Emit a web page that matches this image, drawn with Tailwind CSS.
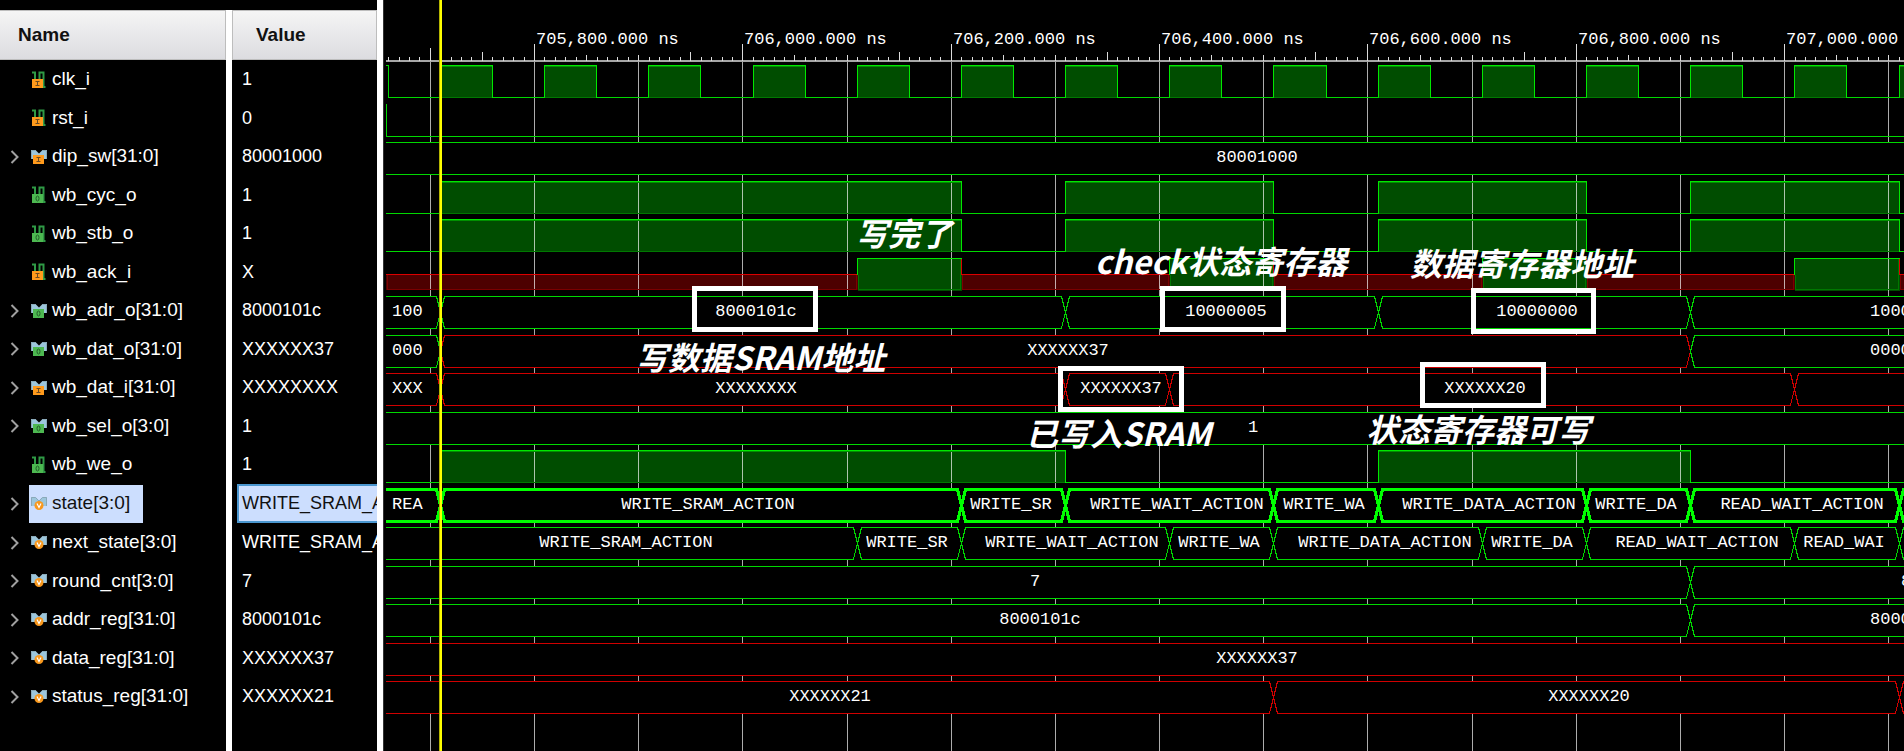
<!DOCTYPE html>
<html lang="zh-CN">
<head>
<meta charset="utf-8">
<title>Waveform viewer</title>
<script src="https://cdn.jsdelivr.net/npm/@tailwindcss/browser@4"></script>
</head>
<body class="bg-black text-white">
<svg width="0" height="0" class="absolute" aria-hidden="true">
  <symbol id="scalar" viewBox="0 0 16 18">
    <path d="M1 1.500h3v7M8.500 9V1.500h4v14.500h2" fill="none" stroke="#2f9a45" stroke-width="2"/>
  </symbol>
  <symbol id="bus" viewBox="0 0 16 18">
    <path d="M0 2h4.500l3.500 3.500L11.500 2H16v9H0z" fill="#9cc6dc"/>
    <path d="M.5 11V2.500h4L8 6l3.500-3.500h4V11" fill="none" stroke="#8aa9b8"/>
  </symbol>
</svg>

<div class="flex min-h-screen">
  <aside class="flex w-[377px] shrink-0 flex-col overflow-hidden pt-[10px] font-['Liberation_Sans',Arial,sans-serif] text-[19px]">
    <table class="w-full table-fixed border-separate border-spacing-0">
      <thead>
        <tr class="h-[50px] text-left font-bold text-[#111111]">
          <th scope="col" class="w-[232px] border-r-[6px] border-white p-0">
            <div class="flex h-[50px] items-center border-t border-r border-b border-[#bdbdbd] bg-linear-to-b from-[#f5f5f5] to-[#dcdce0] pl-[18px]">Name</div>
          </th>
          <th scope="col" class="p-0">
            <div class="flex h-[50px] items-center border border-[#bdbdbd] bg-linear-to-b from-[#f5f5f5] to-[#dcdce0] pl-[23px]">Value</div>
          </th>
        </tr>
      </thead>
      <tbody id="signals"></tbody>
    </table>
    <div class="w-[232px] flex-1 border-r-[6px] border-white"></div>
  </aside>
  <div class="w-[6px] shrink-0 bg-white"></div>
  <main class="relative min-w-0 flex-1 overflow-hidden border-l border-[#333333]">
    <svg id="wave" class="absolute inset-0 h-full w-full font-['Liberation_Mono','Courier_New',monospace] text-[17px]" role="img" aria-label="Signal waveforms"></svg>

    <div class="absolute top-[286px] left-[308px] h-[46px] w-[126px] border-5 border-white"></div>
    <div class="absolute top-[286px] left-[776px] h-[46px] w-[126px] border-5 border-white"></div>
    <div class="absolute top-[288px] left-[1087px] h-[46px] w-[125px] border-5 border-white"></div>
    <div class="absolute top-[366px] left-[674px] h-[46px] w-[126px] border-5 border-white"></div>
    <div class="absolute top-[362px] left-[1036px] h-[46px] w-[126px] border-5 border-white"></div>

    <div class="font-['Noto_Sans_CJK_SC',sans-serif] text-[32px] leading-[32px] font-bold whitespace-nowrap text-white italic">
      <p class="absolute top-[216px] left-[472px]">写完了</p>
      <p class="absolute top-[244px] left-[711px]">check状态寄存器</p>
      <p class="absolute top-[246px] left-[1026px]">数据寄存器地址</p>
      <p class="absolute top-[340px] left-[252px]">写数据SRAM地址</p>
      <p class="absolute top-[416px] left-[642px]">已写入SRAM</p>
      <p class="absolute top-[412px] left-[982px]">状态寄存器可写</p>
    </div>
  </main>
</div>

<script>
/* kind: scalar | bus; badge: I (input), O (output), V (variable) */
const signals = [
  ['clk_i', '1', 'scalar', 'I'], ['rst_i', '0', 'scalar', 'I'], ['dip_sw[31:0]', '80001000', 'bus', 'I'],
  ['wb_cyc_o', '1', 'scalar', 'O'], ['wb_stb_o', '1', 'scalar', 'O'], ['wb_ack_i', 'X', 'scalar', 'I'],
  ['wb_adr_o[31:0]', '8000101c', 'bus', 'O'], ['wb_dat_o[31:0]', 'XXXXXX37', 'bus', 'O'],
  ['wb_dat_i[31:0]', 'XXXXXXXX', 'bus', 'I'], ['wb_sel_o[3:0]', '1', 'bus', 'O'], ['wb_we_o', '1', 'scalar', 'O'],
  ['state[3:0]', 'WRITE_SRAM_ACTION', 'bus', 'V', true], ['next_state[3:0]', 'WRITE_SRAM_ACTION', 'bus', 'V'],
  ['round_cnt[3:0]', '7', 'bus', 'V'], ['addr_reg[31:0]', '8000101c', 'bus', 'V'],
  ['data_reg[31:0]', 'XXXXXX37', 'bus', 'V'], ['status_reg[31:0]', 'XXXXXX21', 'bus', 'V']
];

function badge(kind, type) {
  if (type === 'V')
    return '<circle cx="8" cy="10.500" r="4.500" fill="#f8981d"/>' +
           '<path d="M6 8.500l2 4 2-4" fill="none" stroke="#fff" stroke-width="1.200"/>';
  const x = kind === 'bus' ? 2 : 1, y = kind === 'bus' ? 7 : 8;
  const fill = type === 'I' ? '#ff9a1c' : '#4db851';
  const mark = type === 'I'
    ? `<path d="M${x + 3.5} ${y + 2.5}h4M${x + 5.5} ${y + 2.5}v4M${x + 3.5} ${y + 6.5}h4" stroke="#6b4a20"/>`
    : `<ellipse cx="${x + 5.5}" cy="${y + 4.5}" rx="1.500" ry="2.500" fill="none" stroke="#235c29"/>`;
  return `<rect x="${x}" y="${y}" width="11" height="9" fill="${fill}"/>` + mark;
}

document.getElementById('signals').innerHTML = signals.map(([name, value, kind, type, selected]) => `
  <tr class="odd:h-[39px] even:h-[38px]">
    <th scope="row" class="border-r-[6px] border-white p-0 text-left font-normal">
      <div class="flex h-[38px] items-center">
        <span class="flex w-[29px] shrink-0 items-center pl-[10px]">${kind === 'bus' ? `
          <button type="button" aria-label="Expand ${name}" class="h-4 w-[10px]">
            <svg viewBox="0 0 10 16" class="h-4 w-[10px]"><path d="M1.500 2l6 6-6 6" fill="none" stroke="#a0a0a0" stroke-width="2"/></svg>
          </button>` : ''}</span>
        <span class="${selected ? 'flex h-full items-center bg-[#ccdefe] pr-[13px] pl-[2px] text-[#111111]' : 'flex h-full items-center pl-[2px]'}">
          <svg viewBox="0 0 16 18" class="mr-[5px] h-[18px] w-4"><use href="#${kind}"/>${badge(kind, type)}</svg>${name}
        </span>
      </div>
    </th>
    <td class="overflow-hidden p-0 pl-[5px] text-[18px]">
      <div class="${selected ? 'flex h-[39px] items-center overflow-hidden border-2 border-r-0 border-[#4a96cf] bg-[#ccdefe] pl-[3px] text-[#111111]' : 'flex h-[38px] items-center overflow-hidden pl-[5px]'}">${value}</div>
    </td>
  </tr>`).join('');

/* Waveforms: one clock period spans 104.18 px, the cursor stands on period 0. */
const PERIOD = 104.18, ORIGIN = 56, END = 4000, START = 2;
const GREEN = '#00d800', RED = '#d00000';
const edge = k => Math.round(ORIGIN + PERIOD * k) + .5;
const rowTop = n => 65 + Math.ceil(38.5 * n) + .5;
const H = 32;
const fills = [], grid = [], lines = [], labels = [];
const line = (d, color, w = 1) => lines.push(`<path d="${d}" fill="none" stroke="${color}" stroke-width="${w}"/>`);
const label = (x, y, t, anchor) => labels.push(`<text x="${x}" y="${y}" text-anchor="${anchor}" fill="#ffffff">${t}</text>`);

/* Ruler and grid */
grid.push(`<rect x="${START}" y="60" width="100%" height="2" fill="#a6a6a6"/>`);
for (let i = -14; i < 300; i++) {
  const x = Math.round(150 + i * 10.418), m = ((i % 20) + 20) % 20;
  const y = i === -10 ? 48 : m === 0 ? 44 : m === 15 ? 52 : m % 5 === 0 ? 55 : 57;
  grid.push(`<rect x="${x}" y="${y}" width="1" height="${61 - y}" fill="#dcdcdc"/>`);
  if (m % 10 === 0) grid.push(`<rect x="${x}" y="62" width="1" height="100%" fill="#fff" fill-opacity=".68"/>`);
}
['705,800', '706,000', '706,200', '706,400', '706,600', '706,800', '707,000']
  .forEach((t, i) => label(Math.round(152 + i * 208.36), 44, t + '.000 ns', 'start'));

/* Single-bit signal that is high during each [from, to] pair */
function bit(n, highs, start = START) {
  const t = rowTop(n), b = t + H;
  let x = start;
  for (const [from, to] of highs) {
    const x1 = edge(from), x2 = edge(to);
    fills.push(`<rect x="${x1}" y="${t}" width="${x2 - x1}" height="${H}" fill="#004d00"/>`);
    line(`M${x1} ${b}H${x2}`, '#007800');
    line(`M${x1} ${t + 1}H${x2}`, '#009000');
    line(`M${x1} ${b}V${t}H${x2}V${b}`, '#00e800');
    line(`M${x} ${b}H${x1}`, GREEN);
    x = x2;
  }
  line(`M${x} ${b}H${END}`, GREEN);
}

/* Multi-bit signal: changes at the given periods; one colour for each stretch */
function bus(n, changes, colors, w = 1) {
  const t = rowTop(n), b = t + H, m = t + H / 2;
  lines.push(`<rect x="${START}" y="${t}" width="${END}" height="${H}" fill="#000"/>`);
  const xs = changes.map(edge);
  for (let i = 0; i <= xs.length; i++) {
    const l = i ? xs[i - 1] : null, r = i < xs.length ? xs[i] : null;
    for (const y of [t, b]) {
      const head = l === null ? `M${START} ${y}` : `M${l} ${m}L${l + 4} ${y}`;
      const tail = r === null ? `H${END}` : `H${r - 4}L${r} ${m}`;
      line(head + tail, colors[i] || colors[0], w);
    }
  }
}
const texts = (n, list) => list.forEach(([x, t, a]) => label(x, rowTop(n) + 19.5, t, a || 'middle'));

line('M2 65.500H4.500V97.500', GREEN);
bit(0, Array.from({ length: 30 }, (_, k) => [k, k + .5]), 4);
line('M2.500 104V136', GREEN);
bit(1, []);
bus(2, [], [GREEN]);
const strobes = [[0, 5], [6, 8], [9, 11], [12, 14]];
bit(3, strobes);
bit(4, strobes);

/* wb_ack_i alternates between unknown (half height, red) and high */
{
  const t = rowTop(5), m = t + 16, b = t + H;
  const unknown = (x1, x2) => {
    fills.push(`<rect x="${x1}" y="${m}" width="${x2 - x1}" height="15" fill="#4d0000"/>`);
    line(`M${x1 + 1} ${m}V${m + 15}H${x2 - 1}V${m}`, '#7c0000');
    line(`M${x1} ${m}H${x2}`, '#dc0000');
  };
  let x = START;
  for (const [from, to] of [[4, 5], [7, 8], [10, 11], [13, 14]]) {
    const x1 = edge(from), x2 = edge(to);
    unknown(x, x1);
    fills.push(`<rect x="${x1}" y="${t}" width="${x2 - x1}" height="${H}" fill="#004d00"/>`);
    line(`M${x1 + 1} ${m}V${b - 1}H${x2 - 1}V${t}`, '#007800');
    line(`M${x1} ${m}V${t}H${x2}`, '#00e800');
    line(`M${x2} ${t}V${m}`, '#dc0000');
    x = x2;
  }
  unknown(x, END);
}

bus(6, [0, 6, 9, 12], [GREEN]);
bus(7, [0, 12], [GREEN, RED, GREEN]);
bus(8, [0, 6, 7, 13], [RED]);
bus(9, [], [GREEN]);
bit(10, [[0, 6], [9, 12]]);
bus(12, [4, 5, 7, 8, 10, 11, 13, 14], [GREEN]);
bus(11, [0, 5, 6, 8, 9, 11, 12, 14], ['#00ff00'], 3);
bus(13, [12], [GREEN]);
bus(14, [12], [GREEN]);
bus(15, [], [RED]);
bus(16, [8, 14], [RED]);

texts(2, [[873, '80001000']]);
texts(6, [[8, '100', 'start'], [372, '8000101c'], [842, '10000005'], [1153, '10000000'], [1486, '10000001', 'start']]);
texts(7, [[8, '000', 'start'], [684, 'XXXXXX37'], [1486, '00000000', 'start']]);
texts(8, [[8, 'XXX', 'start'], [372, 'XXXXXXXX'], [737, 'XXXXXX37'], [1101, 'XXXXXX20']]);
texts(9, [[869, '1']]);
texts(11, [[8, 'REA', 'start'], [324, 'WRITE_SRAM_ACTION'], [627, 'WRITE_SR'], [793, 'WRITE_WAIT_ACTION'],
  [940, 'WRITE_WA'], [1105, 'WRITE_DATA_ACTION'], [1252, 'WRITE_DA'], [1418, 'READ_WAIT_ACTION']]);
texts(12, [[242, 'WRITE_SRAM_ACTION'], [523, 'WRITE_SR'], [688, 'WRITE_WAIT_ACTION'], [835, 'WRITE_WA'],
  [1001, 'WRITE_DATA_ACTION'], [1148, 'WRITE_DA'], [1313, 'READ_WAIT_ACTION'], [1460, 'READ_WAI']]);
texts(13, [[651, '7'], [1517, '8', 'start']]);
texts(14, [[656, '8000101c'], [1486, '80001020', 'start']]);
texts(15, [[873, 'XXXXXX37']]);
texts(16, [[446, 'XXXXXX21'], [1205, 'XXXXXX20']]);

const cursor = '<rect x="55" width="3" height="100%" fill="#b4b400"/><rect x="56" width="2" height="100%" fill="#ffff00"/>';
document.getElementById('wave').innerHTML =
  `<g shape-rendering="crispEdges">${fills.join('')}${grid.join('')}${lines.join('')}${cursor}</g>${labels.join('')}`;
</script>
</body>
</html>
